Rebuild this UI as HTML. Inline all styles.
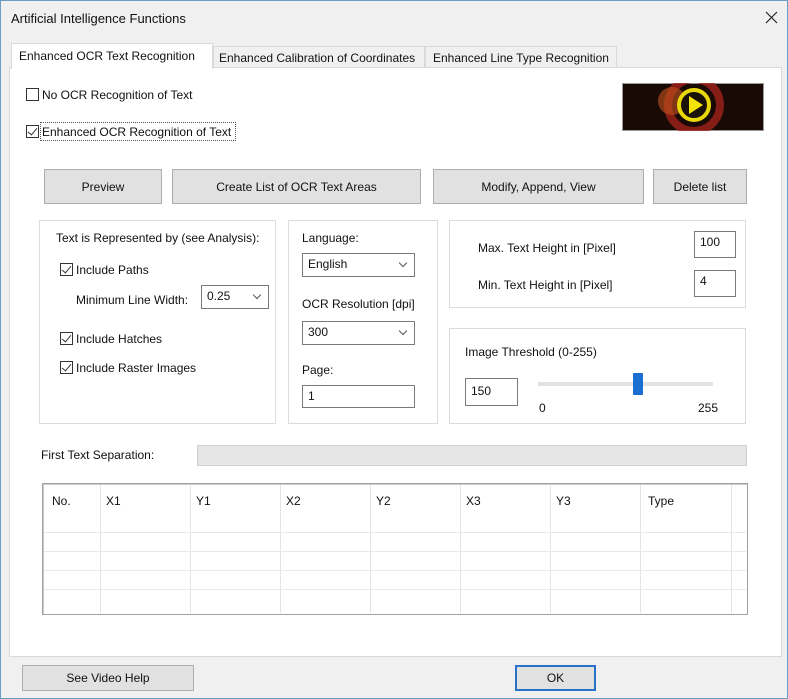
<!DOCTYPE html>
<html><head><meta charset="utf-8"><style>
*{box-sizing:border-box;margin:0;padding:0}
body{width:788px;height:699px;background:#f0f0f0;font-family:"Liberation Sans",sans-serif;font-size:12px;color:#111;position:relative;overflow:hidden;border:1px solid #6d9cc4}
.a{position:absolute}
.t{position:absolute;white-space:nowrap;line-height:14px}
.btn{position:absolute;background:#e1e1e1;border:1px solid #adadad;display:flex;align-items:center;justify-content:center}
.grp{position:absolute;background:#fff;border:1px solid #dcdcdc}
.cb{position:absolute;width:13px;height:13px;border:1px solid #333;background:#fff}
.cb.c::after{content:"";position:absolute;left:3px;top:0px;width:4px;height:8px;border:solid #333;border-width:0 1.5px 1.5px 0;transform:rotate(40deg)}
.in{position:absolute;background:#fff;border:1px solid #7a7a7a;padding:3px 5px;line-height:14px}
.cmb::after{content:"";position:absolute;right:8px;top:6px;width:5px;height:5px;border:solid #555;border-width:0 1px 1px 0;transform:rotate(45deg)}
.vl{position:absolute;top:1px;bottom:1px;width:1px;background:#e4e4e4}
.hl{position:absolute;left:1px;right:1px;height:1px;background:#e8e8e8}
</style></head><body>
<div class="t" style="left:10px;top:11px;font-size:13px">Artificial Intelligence Functions</div>
<svg class="a" style="left:764px;top:10px" width="13" height="13"><path d="M1 1L12 12M12 1L1 12" stroke="#222" stroke-width="1.2"/></svg>

<div class="a" style="left:8px;top:66px;width:773px;height:590px;background:#fff;border:1px solid #d9d9d9"></div>
<div class="a" style="left:212px;top:45px;width:212px;height:22px;background:#f0f0f0;border:1px solid #d9d9d9"></div>
<div class="a" style="left:424px;top:45px;width:192px;height:22px;background:#f0f0f0;border:1px solid #d9d9d9"></div>
<div class="a" style="left:10px;top:42px;width:202px;height:26px;background:#fff;border:1px solid #d9d9d9;border-bottom:none"></div>
<div class="t" style="left:18px;top:48px">Enhanced OCR Text Recognition</div>
<div class="t" style="left:218px;top:50px">Enhanced Calibration of Coordinates</div>
<div class="t" style="left:432px;top:50px">Enhanced Line Type Recognition</div>

<div class="cb" style="left:25px;top:87px"></div>
<div class="t" style="left:41px;top:87px">No OCR Recognition of Text</div>
<div class="cb c" style="left:25px;top:124px"></div>
<div class="a" style="left:39px;top:121px;width:196px;height:19px;border:1px dotted #555"></div>
<div class="t" style="left:41px;top:124px">Enhanced OCR Recognition of Text</div>

<svg class="a" style="left:621px;top:82px" width="142" height="48" viewBox="0 0 142 48">
<rect width="142" height="48" fill="#1a0a06"/>
<rect x="0" y="0" width="142" height="48" fill="none" stroke="#999" stroke-width="2"/>
<circle cx="72" cy="22" r="26" fill="none" stroke="#a0221a" stroke-width="8" opacity=".8"/>
<circle cx="50" cy="18" r="14" fill="#c2531c" opacity=".6"/>
<circle cx="72" cy="22" r="15" fill="#1a1208" stroke="#e8d80a" stroke-width="4"/>
<path d="M67 13 L81 22 L67 31 Z" fill="#f2e40a"/>
</svg>

<div class="btn" style="left:43px;top:168px;width:118px;height:35px">Preview</div>
<div class="btn" style="left:171px;top:168px;width:249px;height:35px">Create List of OCR Text Areas</div>
<div class="btn" style="left:432px;top:168px;width:211px;height:35px">Modify, Append, View</div>
<div class="btn" style="left:652px;top:168px;width:94px;height:35px">Delete list</div>

<div class="grp" style="left:38px;top:219px;width:237px;height:204px"></div>
<div class="t" style="left:55px;top:230px">Text is Represented by (see Analysis):</div>
<div class="cb c" style="left:59px;top:262px"></div><div class="t" style="left:75px;top:262px">Include Paths</div>
<div class="t" style="left:75px;top:292px">Minimum Line Width:</div>
<div class="in cmb" style="left:200px;top:284px;width:68px;height:24px">0.25</div>
<div class="cb c" style="left:59px;top:331px"></div><div class="t" style="left:75px;top:331px">Include Hatches</div>
<div class="cb c" style="left:59px;top:360px"></div><div class="t" style="left:75px;top:360px">Include Raster Images</div>

<div class="grp" style="left:287px;top:219px;width:150px;height:204px"></div>
<div class="t" style="left:301px;top:230px">Language:</div>
<div class="in cmb" style="left:301px;top:252px;width:113px;height:24px">English</div>
<div class="t" style="left:301px;top:296px">OCR Resolution [dpi]</div>
<div class="in cmb" style="left:301px;top:320px;width:113px;height:24px">300</div>
<div class="t" style="left:301px;top:362px">Page:</div>
<div class="in" style="left:301px;top:384px;width:113px;height:23px">1</div>

<div class="grp" style="left:448px;top:219px;width:297px;height:88px"></div>
<div class="t" style="left:477px;top:240px">Max. Text Height in [Pixel]</div>
<div class="in" style="left:693px;top:230px;width:42px;height:27px">100</div>
<div class="t" style="left:477px;top:277px">Min. Text Height in [Pixel]</div>
<div class="in" style="left:693px;top:269px;width:42px;height:27px">4</div>

<div class="grp" style="left:448px;top:327px;width:297px;height:96px"></div>
<div class="t" style="left:464px;top:344px">Image Threshold (0-255)</div>
<div class="in" style="left:464px;top:377px;width:53px;height:28px;padding-top:5px">150</div>
<div class="a" style="left:537px;top:381px;width:175px;height:4px;background:#e2e2e2"></div>
<div class="a" style="left:632px;top:372px;width:10px;height:22px;background:#1a6fd0;border-radius:1px"></div>
<div class="t" style="left:538px;top:400px">0</div>
<div class="t" style="left:697px;top:400px">255</div>

<div class="t" style="left:40px;top:447px">First Text Separation:</div>
<div class="a" style="left:196px;top:444px;width:550px;height:21px;background:#e6e6e6;border:1px solid #cfcfcf"></div>

<div class="a" style="left:41px;top:482px;width:706px;height:132px;background:#fff;border:1px solid #a0a0a0;box-shadow:inset 1px 1px 0 #ccc">
<div class="vl" style="left:57px"></div><div class="vl" style="left:147px"></div><div class="vl" style="left:237px"></div><div class="vl" style="left:327px"></div><div class="vl" style="left:417px"></div><div class="vl" style="left:507px"></div><div class="vl" style="left:597px"></div><div class="vl" style="left:688px"></div>
<div class="hl" style="top:48px"></div><div class="hl" style="top:67px"></div><div class="hl" style="top:86px"></div><div class="hl" style="top:105px"></div>
<div class="t" style="left:9px;top:10px">No.</div>
<div class="t" style="left:63px;top:10px">X1</div>
<div class="t" style="left:153px;top:10px">Y1</div>
<div class="t" style="left:243px;top:10px">X2</div>
<div class="t" style="left:333px;top:10px">Y2</div>
<div class="t" style="left:423px;top:10px">X3</div>
<div class="t" style="left:513px;top:10px">Y3</div>
<div class="t" style="left:605px;top:10px">Type</div>
</div>

<div class="btn" style="left:21px;top:664px;width:172px;height:26px">See Video Help</div>
<div class="btn" style="left:514px;top:664px;width:81px;height:26px;border:2px solid #2a72c8">OK</div>
</body></html>
